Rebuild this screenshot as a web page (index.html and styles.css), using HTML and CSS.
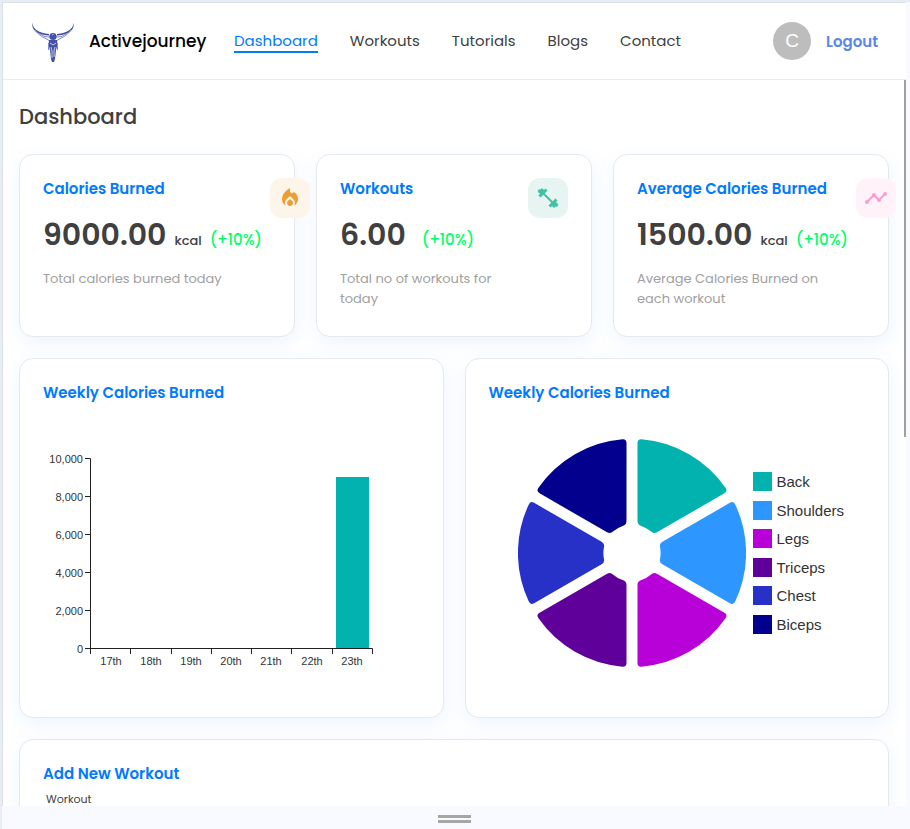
FILE: index.html
```html
<!DOCTYPE html>
<html lang="en">
<head>
<meta charset="utf-8">
<meta name="viewport" content="width=device-width, initial-scale=1">
<title>Activejourney</title>
<link rel="stylesheet" href="styles.css">
</head>
<body>
<div class="window">
  <div class="app">
    <header class="navbar">
      <a class="brand" href="#">
        <svg class="logo" viewBox="0 0 43 41" aria-hidden="true">
          <path class="logo-fill" d="M2 1C0.500 7 7 12 18 13L18 14.500C7 14-1 9 2 1ZM42 1C43.500 7 37 12 26 13L26 14.500C37 14 45 9 42 1Z"/>
          <path class="logo-line" d="M4 9C8 15 14 17 19 20M40 9C36 15 30 17 25 20M9 13Q14 17 19 16M35 13Q30 17 25 16"/>
          <circle class="logo-fill" cx="22" cy="15.500" r="3.600"/>
          <path class="logo-fill" d="M18 19H26L26.500 24L25 29L24 38L23 41H21L20 38L19 29L17.500 24Z"/>
          <path class="logo-shine" d="M19 22L22 24L25 22M20 26L21 30V37M24 26L23 30V36M21 14L22.500 13.500"/>
          <path class="logo-line" d="M17.500 22V29M26.500 22V29"/>
        </svg>
        <span>Activejourney</span>
      </a>
      <nav class="links" aria-label="Main">
        <a class="link active" href="#">Dashboard</a>
        <a class="link" href="#">Workouts</a>
        <a class="link" href="#">Tutorials</a>
        <a class="link" href="#">Blogs</a>
        <a class="link" href="#">Contact</a>
      </nav>
      <div class="account">
        <span class="avatar">C</span>
        <button class="logout" type="button">Logout</button>
      </div>
    </header>
    <main class="content">
      <h1 class="page-title">Dashboard</h1>
      <section class="stats">
        <article class="card stat">
          <div class="stat-text">
            <h2 class="card-title">Calories Burned</h2>
            <p class="value">9000.00<span class="unit">kcal</span><span class="change">(+10%)</span></p>
            <p class="note">Total calories burned today</p>
          </div>
          <div class="badge badge-orange">
            <svg class="icon" viewBox="0 0 24 24" aria-hidden="true"><path d="m12 12.900-2.130 2.090c-.56.560-.87 1.290-.87 2.070C9 18.680 10.350 20 12 20s3-1.320 3-2.940c0-.78-.31-1.520-.87-2.070z"/><path d="m16 6-.44.550C14.380 8.020 12 7.190 12 5.300V2S4 6 4 13c0 2.920 1.560 5.470 3.890 6.860-.56-.79-.89-1.760-.89-2.800 0-1.320.52-2.560 1.470-3.500L12 10.100l3.530 3.470c.95.930 1.470 2.170 1.470 3.490 0 1.020-.31 1.960-.85 2.750 1.890-1.150 3.290-3.060 3.710-5.300.66-3.550-1.070-6.900-3.860-8.510z"/></svg>
          </div>
        </article>
        <article class="card stat">
          <div class="stat-text">
            <h2 class="card-title">Workouts</h2>
            <p class="value">6.00<span class="unit"></span><span class="change">(+10%)</span></p>
            <p class="note">Total no of workouts for today</p>
          </div>
          <div class="badge badge-green">
            <svg class="icon icon-line" viewBox="0 0 24 24" aria-hidden="true"><path d="M5 5L19 19"/><path class="plate" d="M3.500 10.500L10.500 3.500M3 7L7 3M13.500 20.500L20.500 13.500M17 21L21 17M2.500 4L4 5.500M20 18.500L21.500 20"/></svg>
          </div>
        </article>
        <article class="card stat">
          <div class="stat-text">
            <h2 class="card-title">Average Calories Burned</h2>
            <p class="value">1500.00<span class="unit">kcal</span><span class="change">(+10%)</span></p>
            <p class="note">Average Calories Burned on each workout</p>
          </div>
          <div class="badge badge-pink">
            <svg class="icon" viewBox="0 0 24 24" aria-hidden="true"><path d="M23 8c0 1.100-.9 2-2 2-.18 0-.35-.02-.51-.07l-3.560 3.550c.05.160.07.340.07.520 0 1.100-.9 2-2 2s-2-.9-2-2c0-.18.020-.36.070-.52l-2.550-2.550c-.16.050-.34.070-.52.070s-.36-.02-.52-.07l-4.550 4.560c.05.160.07.330.07.510 0 1.100-.9 2-2 2s-2-.9-2-2 .9-2 2-2c.18 0 .35.020.51.070l4.560-4.550C8.020 9.360 8 9.180 8 9c0-1.100.9-2 2-2s2 .9 2 2c0 .18-.02.360-.07.520l2.550 2.550c.16-.05.340-.07.520-.07s.36.020.52.070l3.550-3.560C19.020 8.350 19 8.180 19 8c0-1.100.9-2 2-2s2 .9 2 2z"/></svg>
          </div>
        </article>
      </section>
      <section class="charts">
        <article class="card chart">
          <h2 class="card-title">Weekly Calories Burned</h2>
          <svg class="bar-chart" viewBox="0 0 376 270" role="img" aria-label="Calories burned per day">
            <rect class="bar" x="293" y="70" width="33" height="171"/>
            <path class="axis" d="M42 51.500H47.500V241.500H42M42 89.500H47M42 127.500H47M42 165.500H47M42 203.500H47M47 241.500H329.500V247M47.500 241V247M87.500 241V247M128.500 241V247M168.500 241V247M208.500 241V247M248.500 241V247M289.500 241V247"/>
            <g class="tick tick-y">
              <text x="40" y="56">10,000</text><text x="40" y="94">8,000</text><text x="40" y="132">6,000</text><text x="40" y="170">4,000</text><text x="40" y="208">2,000</text><text x="40" y="246">0</text>
            </g>
            <g class="tick tick-x">
              <text x="68" y="258">17th</text><text x="108" y="258">18th</text><text x="148" y="258">19th</text><text x="188" y="258">20th</text><text x="228" y="258">21th</text><text x="269" y="258">22th</text><text x="309" y="258">23th</text>
            </g>
          </svg>
        </article>
        <article class="card chart">
          <h2 class="card-title">Weekly Calories Burned</h2>
          <div class="pie-row">
            <svg class="pie" viewBox="-114 -114 228 228" role="img" aria-label="Calories by muscle group">
              <defs><path id="slice" d="M30.400-11.200L97.900-50.200Q101.400-52.200 103.200-48.600A114 114 0 0 1 103.200 48.600Q101.400 52.200 97.900 50.200L30.400 11.200Q27 9.200 28.100 5.400A28.500 28.500 0 0 0 28.100-5.400Q27-9.200 30.400-11.200Z"/></defs>
              <use href="#slice" class="back" transform="rotate(-60)"/>
              <use href="#slice" class="shoulders"/>
              <use href="#slice" class="legs" transform="rotate(60)"/>
              <use href="#slice" class="triceps" transform="rotate(120)"/>
              <use href="#slice" class="chest" transform="rotate(180)"/>
              <use href="#slice" class="biceps" transform="rotate(240)"/>
            </svg>
            <ul class="legend">
              <li><i class="swatch back"></i>Back</li>
              <li><i class="swatch shoulders"></i>Shoulders</li>
              <li><i class="swatch legs"></i>Legs</li>
              <li><i class="swatch triceps"></i>Triceps</li>
              <li><i class="swatch chest"></i>Chest</li>
              <li><i class="swatch biceps"></i>Biceps</li>
            </ul>
          </div>
        </article>
      </section>
      <section class="card add">
        <h2 class="card-title">Add New Workout</h2>
        <p class="field-label">Workout</p>
      </section>
    </main>
    <div class="scrollbar"></div>
  </div>
  <footer class="grip-bar"><div class="grip"></div></footer>
</div>
</body>
</html>
```
FILE: styles.css
```css
* { box-sizing: border-box; }
body {
  margin: 0;
  background: #f8faff;
  color: #404040;
  font-family: Poppins, Inter, sans-serif;
}
h1, h2, p, ul { margin: 0; padding: 0; }
a { color: inherit; text-decoration: none; }
.window {
  height: 100vh;
  display: flex;
  flex-direction: column;
  border-top: 2px solid #e8ecf4;
  border-left: 2px solid #e8ecf4;
}
.app {
  position: relative;
  flex: 1;
  min-height: 0;
  margin-right: 4px;
  overflow: hidden;
  background: #fff;
  border-top: 1px solid #dcdfe6;
  border-left: 1px solid #dcdfe6;
}
.navbar {
  display: flex;
  align-items: center;
  height: 77px;
  padding: 0 28px;
  border-bottom: 1px solid #ebebeb;
}
.brand {
  display: flex;
  align-items: center;
  gap: 15px;
  width: 203px;
  color: #000;
  font-size: 17px;
  font-weight: 500;
}
.logo { width: 43px; height: 41px; flex: none; }
.logo-fill { fill: #4450a8; }
.logo-line { fill: none; stroke: #7f89cc; stroke-width: 1; }
.logo-shine { fill: none; stroke: #c5cbee; stroke-width: 1; }
.links { display: flex; gap: 32px; font-size: 15px; }
.link {
  padding-top: 1px;
  line-height: 21px;
  border-bottom: 2px solid transparent;
}
.link.active { color: #007aff; border-color: #007aff; }
.account {
  display: flex;
  align-items: center;
  gap: 15px;
  margin-left: auto;
}
.avatar {
  display: grid;
  place-items: center;
  width: 38px;
  height: 38px;
  border-radius: 50%;
  background: #bdbdbd;
  color: #fff;
  font: 19px "Liberation Sans", sans-serif;
}
.logout {
  padding: 0;
  border: 0;
  background: none;
  color: #5c86e8;
  font: inherit;
  font-size: 15px;
  font-weight: 600;
}
.content { padding: 20px 17px 20px 16px; }
.page-title {
  margin-bottom: 20px;
  font-size: 21px;
  line-height: 34px;
  font-weight: 500;
}
.card {
  border: 1px solid #e6e8ec;
  border-radius: 14px;
  padding: 23px;
  background: #fff;
  box-shadow: 1px 6px 20px rgba(0, 122, 255, 0.08);
}
.stats, .charts { display: grid; gap: 21px; margin-bottom: 21px; }
.stats { grid-template-columns: repeat(3, minmax(0, 1fr)); }
.charts { grid-template-columns: repeat(2, minmax(0, 1fr)); }
.stat { display: flex; gap: 8px; min-height: 183px; }
.stat-text { flex: 1; }
.card-title {
  color: #007aff;
  font-size: 15px;
  line-height: 21px;
  font-weight: 600;
}
.value {
  margin-top: 15px;
  font-size: 30px;
  line-height: 42px;
  font-weight: 600;
  white-space: nowrap;
}
.unit { margin: 0 8px; font-size: 13px; font-weight: 500; }
.change { color: #00ff6a; font-size: 15px; font-weight: 500; }
.note {
  margin-top: 7px;
  max-width: 190px;
  color: #a0a0a0;
  font-size: 13px;
  line-height: 20px;
}
.badge {
  position: relative;
  flex: none;
  display: grid;
  place-items: center;
  width: 40px;
  height: 40px;
  border-radius: 12px;
}
.badge-orange { background: #fdf4ea; color: #eb9e34; }
.badge-green { background: #e6f5f2; color: #41c1a6; }
.badge-pink { background: #fff2f8; color: #ff9ad5; }
.icon { width: 24px; height: 24px; fill: currentColor; }
.icon-line { fill: none; stroke: currentColor; stroke-width: 2; }
.plate { stroke-width: 3; }
.chart { min-height: 360px; }
.bar-chart { display: block; width: 100%; max-width: 376px; margin-top: 4px; }
.bar { fill: #02b2af; }
.axis { fill: none; stroke: #212121; }
.tick { fill: #333; font: 11px "Liberation Sans", sans-serif; }
.tick-y { text-anchor: end; }
.tick-x { text-anchor: middle; }
.pie-row {
  display: flex;
  align-items: center;
  gap: 7px;
  padding: 36px 0 0 29px;
}
.pie { width: 228px; height: 228px; flex: none; }
.legend {
  display: flex;
  flex-direction: column;
  justify-content: space-between;
  height: 162px;
  list-style: none;
  color: #333;
  font: 15px "Liberation Sans", sans-serif;
}
.legend li { display: flex; align-items: center; gap: 5px; height: 19px; }
.swatch { width: 19px; height: 19px; }
.back { fill: #02b2af; background: #02b2af; }
.shoulders { fill: #2e96ff; background: #2e96ff; }
.legs { fill: #b800d8; background: #b800d8; }
.triceps { fill: #60009b; background: #60009b; }
.chest { fill: #2731c8; background: #2731c8; }
.biceps { fill: #03008d; background: #03008d; }
.field-label {
  padding: 6px 3px;
  font-size: 11px;
  line-height: 18px;
}
.scrollbar {
  position: absolute;
  top: 77px;
  right: 0;
  width: 2px;
  height: 357px;
  background: #a0a0a0;
}
.grip-bar {
  display: grid;
  place-items: center;
  height: 23px;
  padding: 2px 4px 0 0;
  background: #f8faff;
}
.grip {
  width: 33px;
  height: 8px;
  border: solid #a6a6a6;
  border-width: 3px 0;
}
```
